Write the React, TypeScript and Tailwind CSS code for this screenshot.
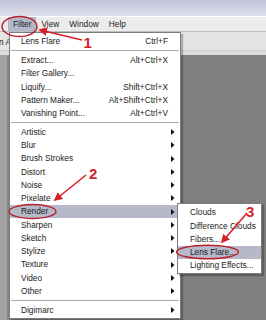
import React from 'react';

type Item =
  | { kind: 'sep' }
  | { kind: 'item'; label: string; shortcut?: string; sub?: boolean; active?: boolean };

const filterItems: Item[] = [
  { kind: 'item', label: 'Lens Flare', shortcut: 'Ctrl+F' },
  { kind: 'sep' },
  { kind: 'item', label: 'Extract...', shortcut: 'Alt+Ctrl+X' },
  { kind: 'item', label: 'Filter Gallery...' },
  { kind: 'item', label: 'Liquify...', shortcut: 'Shift+Ctrl+X' },
  { kind: 'item', label: 'Pattern Maker...', shortcut: 'Alt+Shift+Ctrl+X' },
  { kind: 'item', label: 'Vanishing Point...', shortcut: 'Alt+Ctrl+V' },
  { kind: 'sep' },
  { kind: 'item', label: 'Artistic', sub: true },
  { kind: 'item', label: 'Blur', sub: true },
  { kind: 'item', label: 'Brush Strokes', sub: true },
  { kind: 'item', label: 'Distort', sub: true },
  { kind: 'item', label: 'Noise', sub: true },
  { kind: 'item', label: 'Pixelate', sub: true },
  { kind: 'item', label: 'Render', sub: true, active: true },
  { kind: 'item', label: 'Sharpen', sub: true },
  { kind: 'item', label: 'Sketch', sub: true },
  { kind: 'item', label: 'Stylize', sub: true },
  { kind: 'item', label: 'Texture', sub: true },
  { kind: 'item', label: 'Video', sub: true },
  { kind: 'item', label: 'Other', sub: true },
  { kind: 'sep' },
  { kind: 'item', label: 'Digimarc', sub: true },
];

const renderItems = [
  { label: 'Clouds' },
  { label: 'Difference Clouds' },
  { label: 'Fibers...' },
  { label: 'Lens Flare...', active: true },
  { label: 'Lighting Effects...' },
];

function SubArrow() {
  return (
    <svg width="4" height="6" viewBox="0 0 4 6" className="ml-[3px]">
      <path d="M0 0 L3.5 3 L0 6 Z" fill="#111" />
    </svg>
  );
}

export default function App() {
  return (
    <div className="relative w-[266px] h-[320px] overflow-hidden bg-[#7f7f7f] font-['Liberation_Sans',Arial,sans-serif] text-[8.3px] text-[#1a1a1a]">
      {/* title bar */}
      <div className="h-[16px] bg-gradient-to-b from-[#bfc2d8] to-[#dfe0ea]" />
      <div className="h-px bg-white" />

      {/* menu bar */}
      <div className="h-[15px] flex items-stretch pl-[8px] bg-[#ececec] border-b border-[#bdbdbd]">
        <span className="px-[5px] flex items-center bg-[#b4b7c8]">Filter</span>
        <span className="px-[5px] flex items-center">View</span>
        <span className="px-[5px] flex items-center">Window</span>
        <span className="px-[5px] flex items-center">Help</span>
      </div>

      {/* options bar */}
      <div className="h-[23px] flex flex-col bg-[#e4e4e4]">
        <div className="h-[18px] flex items-end pb-[2px] -ml-[1px]">n A</div>
        <div className="h-[5px] border-t border-[#cfcfcf] bg-[#dcdcdc]" />
      </div>

      {/* workspace */}
      <div className="flex h-[265px]">
        <div className="w-[7px] bg-[#a3a3a3]" />
        <div className="w-[2px] bg-[#858585]" />
        <div className="flex-1" />
      </div>

      {/* Filter dropdown */}
      <div className="absolute left-[9px] top-[32px] w-[172px] bg-white border border-[#7c7c7c] pt-[2px] pb-[1px] shadow-[2px_2px_1px_rgba(0,0,0,0.25)]">
        {filterItems.map((it, i) =>
          it.kind === 'sep' ? (
            <div key={i} className="h-[5.5px] flex flex-col justify-center px-[1px]">
              <div className="h-px bg-[#a9a9a9]" />
              <div className="h-px bg-white" />
            </div>
          ) : (
            <div
              key={i}
              className={`h-[13.25px] flex items-center pl-[11px] ${it.active ? 'bg-[#b6b9c9]' : ''}`}
            >
              <span className="flex-1 whitespace-nowrap">{it.label}</span>
              {it.shortcut && <span className="whitespace-nowrap">{it.shortcut}</span>}
              <span className="w-[12px] flex items-center">{it.sub && <SubArrow />}</span>
            </div>
          )
        )}
      </div>

      {/* Render submenu */}
      <div className="absolute left-[177px] top-[203px] w-[85px] bg-white border border-[#7c7c7c] pt-[2px] pb-[1px] shadow-[2px_2px_1px_rgba(0,0,0,0.25)]">
        {renderItems.map((it) => (
          <div
            key={it.label}
            className={`h-[13.2px] flex items-center pl-[12px] whitespace-nowrap ${it.active ? 'bg-[#b6b9c9]' : ''}`}
          >
            {it.label}
          </div>
        ))}
      </div>

      {/* annotations */}
      <svg className="absolute inset-0 pointer-events-none" width="266" height="320" viewBox="0 0 266 320">
        <defs>
          <marker id="head" viewBox="0 0 10 10" refX="8" refY="5" markerWidth="5.5" markerHeight="5.5" orient="auto">
            <path d="M0 0 L10 5 L0 10 Z" fill="#d8202a" />
          </marker>
        </defs>
        <g fill="none" stroke="#b8202e" strokeWidth="1.4">
          <ellipse cx="19.5" cy="26.5" rx="17.5" ry="10" />
          <ellipse cx="32.5" cy="211.5" rx="23.5" ry="7" />
          <ellipse cx="207.5" cy="252" rx="31" ry="6.8" />
        </g>
        <g stroke="#d8202a" strokeWidth="1.6" fill="none" markerEnd="url(#head)">
          <line x1="82" y1="40" x2="40" y2="30" />
          <line x1="86" y1="175" x2="55" y2="200" />
          <line x1="247" y1="213" x2="222" y2="242" />
        </g>
        <g fill="#d8202a" fontFamily="'Liberation Sans', Arial, sans-serif" fontWeight="bold" fontSize="15">
          <text x="83.5" y="47.5">1</text>
          <text x="89" y="179">2</text>
          <text x="246" y="217">3</text>
        </g>
      </svg>
    </div>
  );
}
